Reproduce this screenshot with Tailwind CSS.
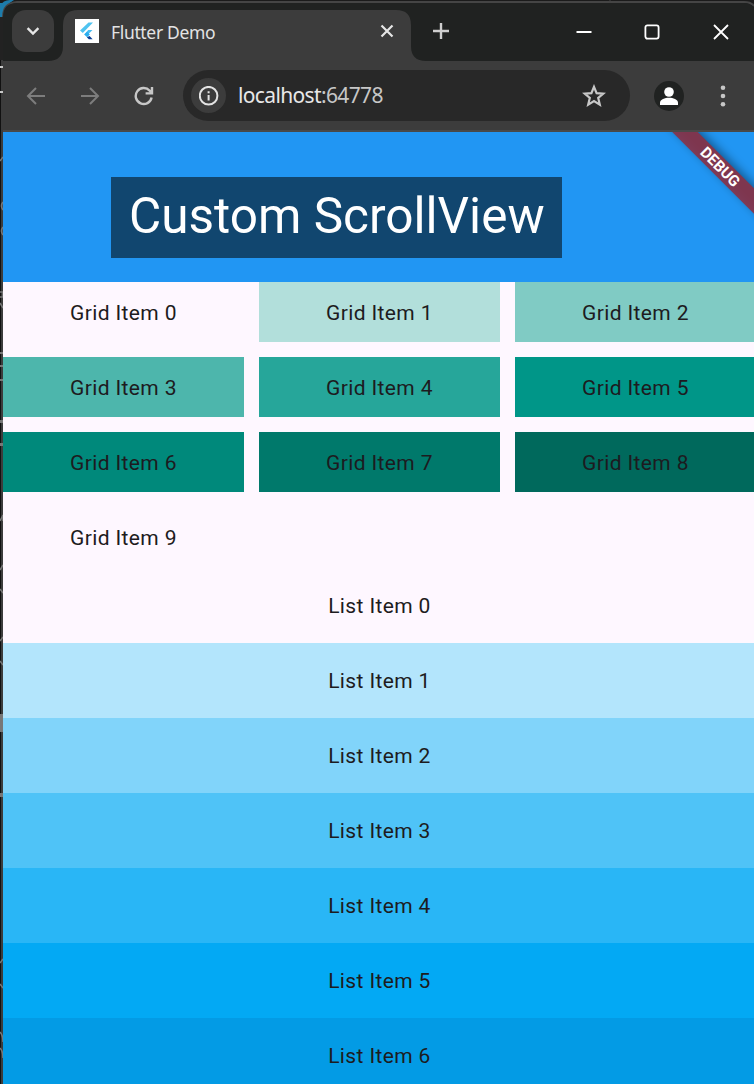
<!DOCTYPE html>
<html lang="en">
<head>
<meta charset="utf-8">
<title>Flutter Demo</title>
<script src="https://cdn.jsdelivr.net/npm/@tailwindcss/browser@4"></script>
</head>
<body class="w-[754px] h-[1084px] overflow-hidden bg-[#1a1a1a] flex font-['Roboto',sans-serif]">
<!-- strip of the desktop behind the window -->
<svg class="w-[3px] h-[1084px] shrink-0" viewBox="0 0 3 1084" shape-rendering="crispEdges">
  <rect width="1" height="1084" fill="#111"/><rect x="1" width="2" height="1084" fill="#3c3c3c"/>
  <rect width="3" height="60" fill="#222"/>
  <rect y="3" width="3" height="14" fill="#1d7cab"/>
  <g fill="#c8c8c8"><rect y="66" width="3" height="2"/><rect y="91" width="3" height="2"/></g>
  <g fill="#777"><rect y="352" width="3" height="2"/><rect y="365" width="3" height="2"/><rect y="379" width="3" height="2"/><rect y="420" width="3" height="3"/><rect y="443" width="3" height="3"/><rect y="714" width="3" height="18"/><rect y="793" width="3" height="4"/></g>
  <g stroke="#777" fill="none" stroke-width="1.6" shape-rendering="auto"><path d="M0 161l3-4M3 202q-3 4 0 8M3 227q-3 4 0 8M0 292h3v5H0M0 303l3 5M0 521l3-6v6M0 570l3-5M0 589l3 4M0 641l3-4M0 661l3 4M0 963l3-4M0 984l3 4M0 1032q3 3 3 10M0 1048q3 3 3 10"/></g>
</svg>
<div class="w-[751px] h-[1084px] flex flex-col">
  <header class="h-[132px] bg-[#3c3c3c] flex flex-col shrink-0">
    <div class="h-[61px] bg-[#202221] border-t border-[#202020] flex relative">
      <svg class="absolute left-[-3px] -top-px" width="754" height="62" viewBox="0 0 754 62">
        <rect width="754" height="3" fill="#1b1b1b"/>
        <path d="M0 17V6Q3 0 10 0H14Q5 5 3 16Z" fill="#1d7cab"/>
        <path d="M3 17Q3 3 17 2H744Q751 2 754 6" fill="none" stroke="#454545" stroke-width="2"/>
        <path d="M17 3H744Q750 3 754 8V61H3V17Q3 3 17 3Z" fill="#202221"/>
        <path d="M610 0V3" stroke="#454545"/>
        <path d="M48 61Q63 61 63 46V25Q63 10 78 10H396Q411 10 411 25V46Q411 61 426 61V62H48Z" fill="#3c3c3c"/>
      </svg>
      <button class="relative mt-[9px] ml-[9px] w-[42px] h-[42px] rounded-[14px] bg-[#3c3c3c] flex items-center justify-center">
        <svg width="16" height="16" viewBox="0 0 16 16" fill="none" stroke="#e6e6e6" stroke-width="2.4"><path d="M2.6 5.2 8 10.6l5.4-5.4"/></svg>
      </button>
      <div class="relative ml-[9px] mt-[9px] w-[348px] h-[42px] flex items-center">
        <svg class="ml-3" width="24" height="24" viewBox="0 0 24 24"><path fill="#fff" d="M0 0h24v24H0z"/><path fill="#4fc3f0" d="M13.5 3.5H18L7.8 14 5 11.5z"/><path fill="#48bdf2" d="M13.2 11H17.5l-4.3 4.3-4 .2z"/><path fill="#29aef0" d="m9.2 15.4 2.8-2.6 2.9 2.8-2.8 2.6z"/><path fill="#0a3f96" d="m11.8 18.3 2.8-1.2 3 3.2h-3.8z"/></svg>
        <span class="ml-3 mt-[2px] w-[269px] whitespace-nowrap text-[17.5px] leading-6 tracking-[-0.34px] text-[#e3e3e3] font-['Noto_Sans',sans-serif]">Flutter Demo</span>
        <svg width="14" height="14" viewBox="0 0 14 14" fill="none" stroke="#e6e6e6" stroke-width="2.2"><path d="m1.5 1.5 11 11M12.5 1.5l-11 11"/></svg>
      </div>
      <svg class="relative mt-[22px] ml-[22px]" width="16" height="16" viewBox="0 0 16 16" fill="none" stroke="#cfcfcf" stroke-width="2.4"><path d="M8 0v16M0 8h16"/></svg>
      <div class="relative ml-auto mr-[25px] mt-[23px] flex h-4 items-center">
        <svg width="16" height="16" viewBox="0 0 16 16"><path d="M.5 7h15v2H.5z" fill="#fff"/></svg>
        <svg class="ml-[52px]" width="16" height="16" viewBox="0 0 16 16" fill="none" stroke="#fff" stroke-width="1.8"><rect x="1.4" y="1.4" width="13.2" height="13.2" rx="2"/></svg>
        <svg class="ml-[53px]" width="16" height="16" viewBox="0 0 16 16" fill="none" stroke="#fff" stroke-width="1.8"><path d="m1 1 14 14M15 1 1 15"/></svg>
      </div>
    </div>
    <div class="h-[69px] flex items-center text-[#c7c7c7]">
      <svg class="ml-[23px]" width="20" height="20" viewBox="0 0 20 20" fill="none" stroke="#7d7d7d" stroke-width="2"><path d="M19 10H2M10 2l-8 8 8 8"/></svg>
      <svg class="ml-[34px]" width="20" height="20" viewBox="0 0 20 20" fill="none" stroke="#7d7d7d" stroke-width="2"><path d="M1 10h17M10 2l8 8-8 8"/></svg>
      <svg class="ml-[34px]" width="20" height="20" viewBox="0 0 20 20" fill="none" stroke="#c7c7c7" stroke-width="2.4"><path d="M17.6 11.5a8 8 0 1 1-1.9-6.8L18 7M18 1v6.4h-6.4"/></svg>
      <div class="ml-[29px] w-[447px] h-[51px] rounded-full bg-[#282828] flex items-center">
        <div class="ml-2 w-[35px] h-[35px] rounded-full bg-[#3c3c3c] flex items-center justify-center">
          <svg width="20" height="20" viewBox="0 0 20 20" fill="none" stroke="#e3e3e3"><circle cx="9.6" cy="9.7" r="8.8" stroke-width="2"/><path d="M9.6 9v5.5M9.6 5.2v2" stroke-width="2"/></svg>
        </div>
        <span class="ml-3 -mt-0.5 w-[344px] whitespace-nowrap text-[21px] leading-7 tracking-[-0.64px] text-[#c7c7c7] font-['Noto_Sans',sans-serif]"><span class="text-[#e8e8e8]">localhost</span>:64778</span>
        <svg width="24" height="24" viewBox="0 0 24 24" fill="none" stroke="#c7c7c7" stroke-width="2.2"><path d="m12 2.8 2.6 6.3 6.8.5-5.2 4.4 1.6 6.6L12 17.1l-5.8 3.5L7.8 14 2.6 9.6l6.8-.5z"/></svg>
      </div>
      <svg class="ml-6" width="30" height="30" viewBox="0 0 30 30"><circle cx="15" cy="15" r="15" fill="#202221"/><circle cx="15" cy="11" r="4.8" fill="#fff"/><path d="M6 24v-2.5c0-3 5-4.8 9-4.8s9 1.8 9 4.8V24z" fill="#fff"/></svg>
      <svg class="ml-9" width="6" height="24" viewBox="0 0 6 24" fill="#c7c7c7"><circle cx="3" cy="3.7" r="2.3"/><circle cx="3" cy="12" r="2.3"/><circle cx="3" cy="20.2" r="2.3"/></svg>
    </div>
    <div class="h-[2px] bg-[#494949]"></div>
  </header>
  <main class="h-[952px] bg-[#fef7ff] text-[#1d1b20] text-[21px] tracking-[0.375px] overflow-hidden relative">
    <div class="h-[150px] bg-[#2196f3] pt-[45px] pl-[108px]">
      <h1 class="w-[451.3px] h-[81px] bg-[#11466f] text-white text-[49.5px] leading-[79px] tracking-normal pl-[18px] whitespace-nowrap">Custom ScrollView</h1>
    </div>
    <div class="grid w-[753px] grid-cols-3 gap-[15px] auto-rows-[60px] text-center leading-[63px] h-[286px]">
      <div>Grid Item 0</div><div class="bg-[#b2dfdb]">Grid Item 1</div><div class="bg-[#80cbc4]">Grid Item 2</div>
      <div class="bg-[#4db6ac]">Grid Item 3</div><div class="bg-[#26a69a]">Grid Item 4</div><div class="bg-[#009688]">Grid Item 5</div>
      <div class="bg-[#00897b]">Grid Item 6</div><div class="bg-[#00796b]">Grid Item 7</div><div class="bg-[#00695c]">Grid Item 8</div>
      <div>Grid Item 9</div>
    </div>
    <div class="w-[753px] text-center leading-[77px]">
      <div class="h-[75px]">List Item 0</div>
      <div class="h-[75px] bg-[#b3e5fc]">List Item 1</div>
      <div class="h-[75px] bg-[#81d4fa]">List Item 2</div>
      <div class="h-[75px] bg-[#4fc3f7]">List Item 3</div>
      <div class="h-[75px] bg-[#29b6f6]">List Item 4</div>
      <div class="h-[75px] bg-[#03a9f4]">List Item 5</div>
      <div class="h-[75px] bg-[#039be5]">List Item 6</div>
    </div>
    <div class="absolute right-0 top-0 w-[120px] h-[120px] overflow-hidden">
      <div class="absolute left-[-12px] top-[24px] w-[200px] h-[18px] rotate-45 bg-black/40 blur-[5px]"></div>
      <div class="absolute left-[-14px] top-[26px] w-[200px] h-[18px] rotate-45 bg-[#8a3247]/90 text-white text-[15.3px] leading-[19px] tracking-normal font-bold text-center">DEBUG</div>
    </div>
  </main>
</div>
</body>
</html>
